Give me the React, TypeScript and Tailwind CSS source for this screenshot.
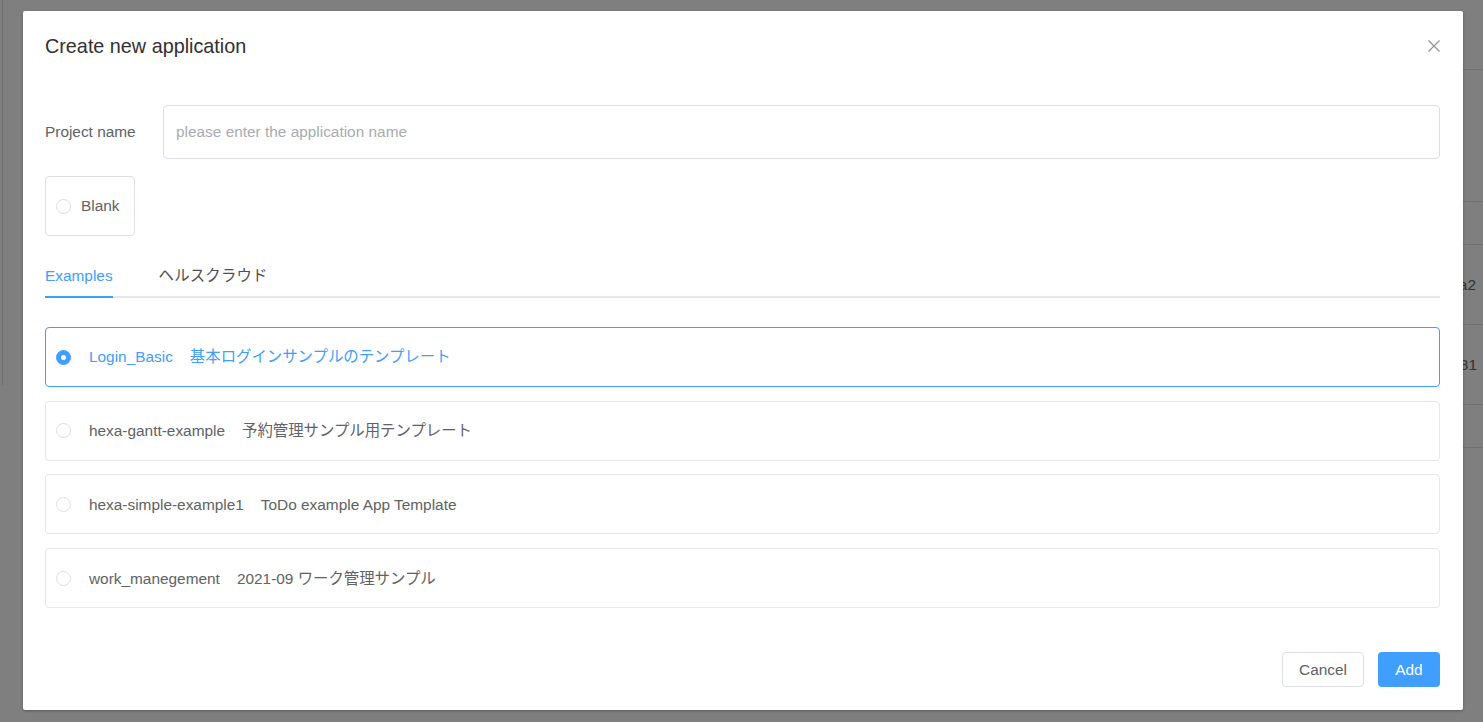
import { useState } from "react";

const templates = [
  { name: "Login_Basic", desc: "基本ログインサンプルのテンプレート" },
  { name: "hexa-gantt-example", desc: "予約管理サンプル用テンプレート" },
  { name: "hexa-simple-example1", desc: "ToDo example App Template" },
  { name: "work_manegement", desc: "2021-09 ワーク管理サンプル" },
];

function Radio({ checked }: { checked: boolean }) {
  return checked ? (
    <span className="flex h-[15px] w-[15px] shrink-0 items-center justify-center rounded-full border border-[#409eff] bg-[#409eff]">
      <span className="h-[5px] w-[5px] rounded-full bg-white" />
    </span>
  ) : (
    <span className="h-[15px] w-[15px] shrink-0 rounded-full border border-[#dcdfe6] bg-white" />
  );
}

export default function App() {
  const [selected, setSelected] = useState(0);
  const [tab, setTab] = useState(0);

  return (
    <div className="relative h-[722px] w-full overflow-hidden bg-white font-['Liberation_Sans','Noto_Sans_CJK_JP',sans-serif] text-[15.4px]">
      {/* page behind the dialog */}
      <div className="flex h-full">
        <div className="ml-[2px] h-[385px] w-px bg-[#dcdcdc]" />
        <div className="ml-[40px] flex flex-1 flex-col text-[#666]">
          <div className="h-[70px] border-b border-[#e0e0e0]" />
          <div className="h-[132px] border-b border-[#e0e0e0]" />
          <div className="h-[43px] border-b border-[#e0e0e0]" />
          <div className="flex h-[80px] items-center justify-end border-b border-[#e0e0e0] pr-[7px]">
            sample_data_a2
          </div>
          <div className="flex h-[80px] items-center justify-end border-b border-[#e0e0e0] pr-[6px]">
            2021-09-1481
          </div>
          <div className="h-[43px] border-b border-[#e0e0e0]" />
        </div>
      </div>

      {/* overlay + dialog */}
      <div className="absolute inset-0 bg-black/50">
        <div className="ml-[23px] mt-[11px] flex w-[1440px] flex-col rounded-[2px] bg-white pb-[23px] pl-[22px] pr-[23px] pt-[23px] shadow-[0_1px_3px_rgba(0,0,0,0.3)]">
          {/* Header */}
          <div className="flex items-center justify-between">
            <h2 className="text-[19.8px] leading-[24px] text-[#303133]">Create new application</h2>
            <svg width="12" height="12" viewBox="0 0 12 12">
              <path d="M0.5 0.5 L11.5 11.5 M11.5 0.5 L0.5 11.5" stroke="#909399" strokeWidth="1.2" />
            </svg>
          </div>

          {/* Project name */}
          <div className="mt-[47px] flex items-center">
            <label className="w-[118px] shrink-0 text-[#606266]">Project name</label>
            <input
              className="h-[54px] flex-1 rounded-[4px] border border-[#dcdfe6] px-[12px] text-[#606266] outline-none placeholder:text-[#a8abb2]"
              placeholder="please enter the application name"
            />
          </div>

          {/* Blank */}
          <div className="mt-[17px] flex">
            <div className="flex h-[60px] items-center gap-[10px] rounded-[4px] border border-[#dcdfe6] pl-[10px] pr-[14px] text-[#606266]">
              <Radio checked={false} />
              <span>Blank</span>
            </div>
          </div>

          {/* Tabs */}
          <div className="mt-[19px] flex border-b-2 border-[#e4e7ed]">
            <button
              onClick={() => setTab(0)}
              className={`-mb-[2px] h-[43px] border-b-2 ${tab === 0 ? "border-[#409eff] text-[#409eff]" : "border-transparent text-[#505050]"}`}
            >
              Examples
            </button>
            <button
              onClick={() => setTab(1)}
              className={`-mb-[2px] ml-[46px] h-[43px] border-b-2 tracking-[0.2px] ${tab === 1 ? "border-[#409eff] text-[#409eff]" : "border-transparent text-[#505050]"}`}
            >
              ヘルスクラウド
            </button>
          </div>

          {/* Template list */}
          <div className="mt-[29px] flex flex-col gap-[13.7px]">
            {templates.map((t, i) => (
              <div
                key={t.name}
                onClick={() => setSelected(i)}
                className={`flex h-[60px] cursor-pointer items-center rounded-[4px] border pl-[10px] ${selected === i ? "border-[#409eff] text-[#409eff]" : "border-[#e4e7ed] text-[#606266]"}`}
              >
                <Radio checked={selected === i} />
                <span className="ml-[18px]">{t.name}</span>
                <span className="ml-[17px]">{t.desc}</span>
              </div>
            ))}
          </div>

          {/* Footer */}
          <div className="mt-[44px] flex justify-end gap-[14px]">
            <button className="h-[35px] w-[82px] rounded-[4px] border border-[#dcdfe6] bg-white text-[#606266]">
              Cancel
            </button>
            <button className="h-[35px] w-[62px] rounded-[4px] bg-[#409eff] text-white">Add</button>
          </div>
        </div>
      </div>
    </div>
  );
}
